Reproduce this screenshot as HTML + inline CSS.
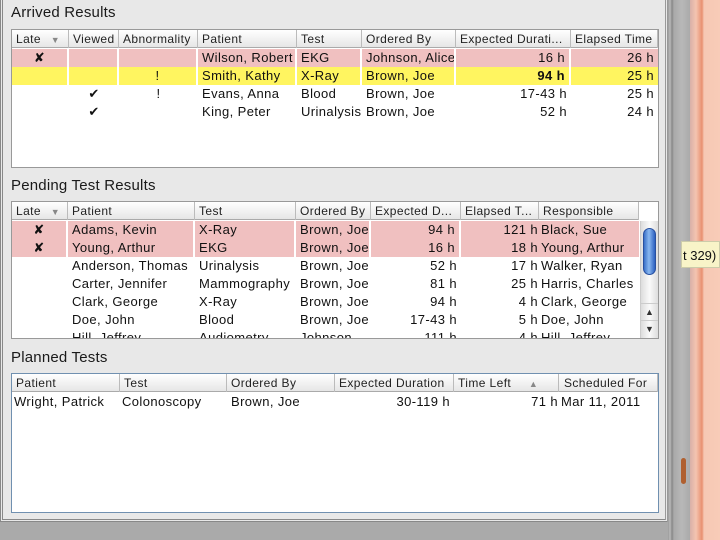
<!DOCTYPE html>
<html><head><meta charset="utf-8"><style>
*{margin:0;padding:0;box-sizing:border-box}
body{width:720px;height:540px;overflow:hidden;background:#aaa;position:relative;font-family:"Liberation Sans","DejaVu Sans",sans-serif;font-size:13px;color:#111}
.a{position:absolute}
.panel{left:0;top:0;width:668px;height:522px;background:#e8e8e8;border-left:3px double #888;border-bottom:3px double #888;border-right:3px double #999}
.title{font-size:15px;color:#1a1a1a;letter-spacing:.2px}
.box{background:#fff;border:1px solid #999}
.hdr{height:18px;background:linear-gradient(#fff,#e6e6e6);border-bottom:1px solid #aaa;font-size:12px;color:#222}
.c{position:absolute;top:0;height:18px;line-height:18px;padding:0 4px;white-space:nowrap;overflow:hidden;letter-spacing:.4px}
.hdr .c{border-right:1px solid #bbb;line-height:18px}
.r{text-align:right}.ctr{text-align:center}
.row{position:absolute;left:0;height:18px}
.pink{background:#f0c0c0}.yel{background:#fff560}
.pink .c,.yel .c{border-right:2px solid #fff}
</style></head><body>
<div class="a" style="left:668px;top:0;width:22px;height:540px;background:linear-gradient(90deg,#999 0,#bbb 2px,#888 4px,#aaa 6px,#b8b8b8 14px,#aaa 22px)"></div>
<div class="a" style="left:690px;top:0;width:30px;height:540px;background:linear-gradient(90deg,#d8b0a8 0,#f4c4b0 6px,#e89070 12px,#f6c8b4 14px,#f8ccb8 30px)"></div>
<div class="a" style="left:681px;top:458px;width:5px;height:26px;background:#b06030;border-radius:3px"></div>
<div class="a" style="left:681px;top:241px;width:39px;height:27px;background:#f8f4c8;border:1px solid #cca;font-size:13px;line-height:27px;padding-left:1px">t 329)</div>
<div class="a panel"></div>

<div class="a title" style="left:11px;top:4px">Arrived Results</div>
<div class="a box" style="left:11px;top:29px;width:648px;height:139px">
 <div class="hdr a" style="left:0;top:0;width:646px">
  <div class="c" style="left:0;width:57px">Late <span style="color:#888;font-size:9px;margin-left:6px">▼</span></div>
  <div class="c" style="left:57px;width:50px">Viewed</div>
  <div class="c" style="left:107px;width:79px">Abnormality</div>
  <div class="c" style="left:186px;width:99px">Patient</div>
  <div class="c" style="left:285px;width:65px">Test</div>
  <div class="c" style="left:350px;width:94px">Ordered By</div>
  <div class="c" style="left:444px;width:115px">Expected Durati...</div>
  <div class="c" style="left:559px;width:87px">Elapsed Time</div>
 </div>
 <div class="row pink" style="top:19px;width:646px"><div class="c ctr" style="left:0;width:57px">✘</div><div class="c" style="left:57px;width:50px"></div><div class="c" style="left:107px;width:79px"></div><div class="c" style="left:186px;width:99px">Wilson, Robert</div><div class="c" style="left:285px;width:65px">EKG</div><div class="c" style="left:350px;width:94px">Johnson, Alice</div><div class="c r" style="left:444px;width:115px">16 h</div><div class="c r" style="left:559px;width:87px;border:0">26 h</div></div>
 <div class="row yel" style="top:37px;width:646px"><div class="c" style="left:0;width:57px"></div><div class="c" style="left:57px;width:50px"></div><div class="c ctr" style="left:107px;width:79px">!</div><div class="c" style="left:186px;width:99px">Smith, Kathy</div><div class="c" style="left:285px;width:65px">X-Ray</div><div class="c" style="left:350px;width:94px">Brown, Joe</div><div class="c r" style="left:444px;width:115px;font-weight:bold">94 h</div><div class="c r" style="left:559px;width:87px;border:0">25 h</div></div>
 <div class="row" style="top:55px;width:646px"><div class="c ctr" style="left:57px;width:50px">✔</div><div class="c ctr" style="left:107px;width:79px">!</div><div class="c" style="left:186px;width:99px">Evans, Anna</div><div class="c" style="left:285px;width:65px">Blood</div><div class="c" style="left:350px;width:94px">Brown, Joe</div><div class="c r" style="left:444px;width:115px">17-43 h</div><div class="c r" style="left:559px;width:87px">25 h</div></div>
 <div class="row" style="top:73px;width:646px"><div class="c ctr" style="left:57px;width:50px">✔</div><div class="c" style="left:186px;width:99px">King, Peter</div><div class="c" style="left:285px;width:65px">Urinalysis</div><div class="c" style="left:350px;width:94px">Brown, Joe</div><div class="c r" style="left:444px;width:115px">52 h</div><div class="c r" style="left:559px;width:87px">24 h</div></div>
</div>

<div class="a title" style="left:11px;top:177px">Pending Test Results</div>
<div class="a box" style="left:11px;top:201px;width:648px;height:138px;overflow:hidden">
 <div class="hdr a" style="left:0;top:0;width:627px">
  <div class="c" style="left:0;width:56px">Late <span style="color:#888;font-size:9px;margin-left:6px">▼</span></div>
  <div class="c" style="left:56px;width:127px">Patient</div>
  <div class="c" style="left:183px;width:101px">Test</div>
  <div class="c" style="left:284px;width:75px">Ordered By</div>
  <div class="c" style="left:359px;width:90px">Expected D...</div>
  <div class="c" style="left:449px;width:78px">Elapsed T...</div>
  <div class="c" style="left:527px;width:100px">Responsible</div>
 </div>
 <div class="row pink" style="top:19px;width:627px"><div class="c ctr" style="left:0;width:56px">✘</div><div class="c" style="left:56px;width:127px">Adams, Kevin</div><div class="c" style="left:183px;width:101px">X-Ray</div><div class="c" style="left:284px;width:75px">Brown, Joe</div><div class="c r" style="left:359px;width:90px">94 h</div><div class="c r" style="left:449px;width:78px;padding-right:1px;border:0">121 h</div><div class="c" style="left:527px;width:100px;padding-left:2px;border:0">Black, Sue</div></div>
 <div class="row pink" style="top:37px;width:627px"><div class="c ctr" style="left:0;width:56px">✘</div><div class="c" style="left:56px;width:127px">Young, Arthur</div><div class="c" style="left:183px;width:101px">EKG</div><div class="c" style="left:284px;width:75px">Brown, Joe</div><div class="c r" style="left:359px;width:90px">16 h</div><div class="c r" style="left:449px;width:78px;padding-right:1px;border:0">18 h</div><div class="c" style="left:527px;width:100px;padding-left:2px;border:0">Young, Arthur</div></div>
 <div class="row" style="top:55px;width:627px"><div class="c" style="left:56px;width:127px">Anderson, Thomas</div><div class="c" style="left:183px;width:101px">Urinalysis</div><div class="c" style="left:284px;width:75px">Brown, Joe</div><div class="c r" style="left:359px;width:90px">52 h</div><div class="c r" style="left:449px;width:78px;padding-right:1px">17 h</div><div class="c" style="left:527px;width:100px;padding-left:2px">Walker, Ryan</div></div>
 <div class="row" style="top:73px;width:627px"><div class="c" style="left:56px;width:127px">Carter, Jennifer</div><div class="c" style="left:183px;width:101px">Mammography</div><div class="c" style="left:284px;width:75px">Brown, Joe</div><div class="c r" style="left:359px;width:90px">81 h</div><div class="c r" style="left:449px;width:78px;padding-right:1px">25 h</div><div class="c" style="left:527px;width:100px;padding-left:2px">Harris, Charles</div></div>
 <div class="row" style="top:91px;width:627px"><div class="c" style="left:56px;width:127px">Clark, George</div><div class="c" style="left:183px;width:101px">X-Ray</div><div class="c" style="left:284px;width:75px">Brown, Joe</div><div class="c r" style="left:359px;width:90px">94 h</div><div class="c r" style="left:449px;width:78px;padding-right:1px">4 h</div><div class="c" style="left:527px;width:100px;padding-left:2px">Clark, George</div></div>
 <div class="row" style="top:109px;width:627px"><div class="c" style="left:56px;width:127px">Doe, John</div><div class="c" style="left:183px;width:101px">Blood</div><div class="c" style="left:284px;width:75px">Brown, Joe</div><div class="c r" style="left:359px;width:90px">17-43 h</div><div class="c r" style="left:449px;width:78px;padding-right:1px">5 h</div><div class="c" style="left:527px;width:100px;padding-left:2px">Doe, John</div></div>
 <div class="row" style="top:127px;width:627px"><div class="c" style="left:56px;width:127px">Hill, Jeffrey</div><div class="c" style="left:183px;width:101px">Audiometry</div><div class="c" style="left:284px;width:75px">Johnson</div><div class="c r" style="left:359px;width:90px">111 h</div><div class="c r" style="left:449px;width:78px;padding-right:1px">4 h</div><div class="c" style="left:527px;width:100px;padding-left:2px">Hill, Jeffrey</div></div>
 <div class="a" style="left:628px;top:19px;width:18px;height:118px;background:linear-gradient(90deg,#ddd,#fafafa 50%,#ddd);border-left:1px solid #ccc"></div>
 <div class="a" style="left:631px;top:26px;width:13px;height:47px;border-radius:7px;background:linear-gradient(90deg,#3a70c8,#8ab8f0 45%,#2c60c0);border:1px solid #2850a0"></div>
 <div class="a" style="left:629px;top:101px;width:17px;height:17px;font-size:9px;text-align:center;line-height:17px;color:#333;border-top:1px solid #ccc">▲</div>
 <div class="a" style="left:629px;top:118px;width:17px;height:17px;font-size:9px;text-align:center;line-height:17px;color:#333;border-top:1px solid #ccc">▼</div>
</div>

<div class="a title" style="left:11px;top:349px">Planned Tests</div>
<div class="a box" style="left:11px;top:373px;width:648px;height:140px;border-color:#7090b0">
 <div class="hdr a" style="left:0;top:0;width:646px">
  <div class="c" style="left:0;width:108px">Patient</div>
  <div class="c" style="left:108px;width:107px">Test</div>
  <div class="c" style="left:215px;width:108px">Ordered By</div>
  <div class="c" style="left:323px;width:119px">Expected Duration</div>
  <div class="c" style="left:442px;width:105px">Time Left <span style="color:#888;font-size:9px;margin-left:14px">▲</span></div>
  <div class="c" style="left:547px;width:99px;padding-left:5px">Scheduled For</div>
 </div>
 <div class="row" style="top:19px;width:646px"><div class="c" style="left:0;width:108px;padding-left:2px">Wright, Patrick</div><div class="c" style="left:108px;width:107px;padding-left:2px">Colonoscopy</div><div class="c" style="left:215px;width:108px">Brown, Joe</div><div class="c r" style="left:323px;width:119px">30-119 h</div><div class="c r" style="left:442px;width:105px;padding-right:1px">71 h</div><div class="c" style="left:547px;width:99px;padding-left:2px">Mar 11, 2011</div></div>
</div>
</body></html>
